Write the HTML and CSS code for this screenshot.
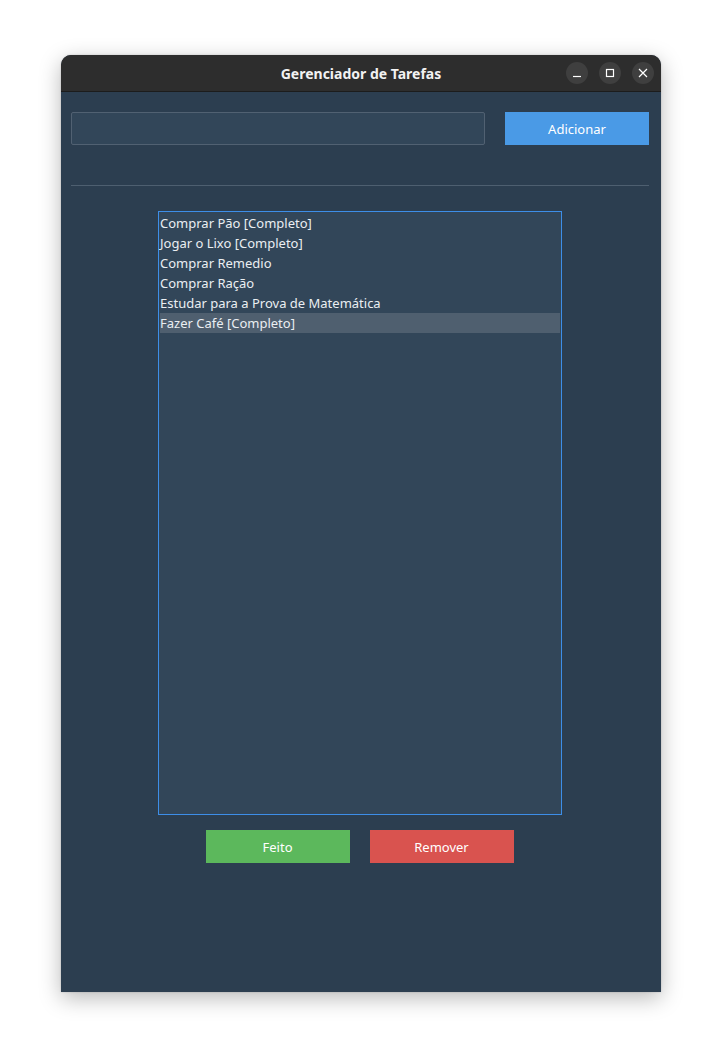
FILE: index.html
```html
<!DOCTYPE html>
<html lang="pt">
<head>
<meta charset="utf-8">
<title>Gerenciador de Tarefas</title>
<link rel="stylesheet" href="styles.css">
</head>
<body>
<div class="window">
  <div class="titlebar">
    <span class="title">Gerenciador de Tarefas</span>
    <div class="controls">
      <span class="ctl"><svg width="10" height="10" viewBox="0 0 10 10"><path d="M1 8.5H9" stroke="#fff" stroke-width="1.2"/></svg></span>
      <span class="ctl"><svg width="10" height="10" viewBox="0 0 10 10"><rect x="1.5" y="1.5" width="7" height="7" fill="none" stroke="#fff" stroke-width="1.2"/></svg></span>
      <span class="ctl"><svg width="10" height="10" viewBox="0 0 10 10"><path d="M1 1L9 9M9 1L1 9" stroke="#fff" stroke-width="1.2"/></svg></span>
    </div>
  </div>
  <div class="content">
    <div class="entry-row">
      <input class="entry" type="text">
      <button class="btn btn-add">Adicionar</button>
    </div>
    <div class="sep"></div>
    <ul class="list">
      <li>Comprar Pão [Completo]</li>
      <li>Jogar o Lixo [Completo]</li>
      <li>Comprar Remedio</li>
      <li>Comprar Ração</li>
      <li>Estudar para a Prova de Matemática</li>
      <li class="selected">Fazer Café [Completo]</li>
    </ul>
    <div class="actions">
      <button class="btn btn-done">Feito</button>
      <button class="btn btn-remove">Remover</button>
    </div>
  </div>
</div>
</body>
</html>
```

FILE: styles.css
```css
* { box-sizing: border-box; }
html, body { margin: 0; padding: 0; background: #ffffff; }
body {
  width: 722px;
  height: 1059px;
  font-family: "Noto Sans", "Open Sans", sans-serif;
  padding: 55px 0 0 61px;
}
.window {
  width: 600px;
  height: 937px;
  background: #2c3e50;
  border-radius: 10px 10px 0 0;
  box-shadow: 0 6px 22px rgba(0,0,0,0.28), 0 0 2px rgba(0,0,0,0.2);
  display: flex;
  flex-direction: column;
}
.titlebar {
  height: 37px;
  background: #2d2d2d;
  border-radius: 10px 10px 0 0;
  border-bottom: 1px solid #1c1c1c;
  display: flex;
  align-items: center;
  justify-content: center;
  position: relative;
}
.title {
  color: #f2f2f2;
  font-family: "Noto Sans", sans-serif;
  font-weight: 700;
  font-size: 14px;
  letter-spacing: 0;
}
.controls {
  position: absolute;
  right: 7px;
  top: 7px;
  display: flex;
  gap: 11px;
}
.ctl {
  width: 22px;
  height: 22px;
  border-radius: 50%;
  background: #3f3f3f;
  display: flex;
  align-items: center;
  justify-content: center;
}
.content {
  flex: 1;
  padding: 20px 12px 0 10px;
  display: flex;
  flex-direction: column;
}
.entry-row {
  display: flex;
  gap: 20px;
  align-items: flex-start;
}
.entry {
  width: 414px;
  height: 33px;
  background: #324659;
  border: 1px solid #516172;
  border-radius: 2px;
  outline: none;
  margin: 0;
}
.btn {
  width: 144px;
  height: 33px;
  border: none;
  border-radius: 0;
  color: #ffffff;
  font-family: "Noto Sans", sans-serif;
  font-size: 13px;
  padding: 0;
  margin: 0;
}
.btn-add { background: #4a9ae6; }
.btn-done { background: #5cb85c; }
.btn-remove { background: #d9534f; }
.sep {
  height: 1px;
  background: #4e5f70;
  margin-top: 40px;
}
.list {
  list-style: none;
  margin: 25px 0 0 87px;
  padding: 1px 1px;
  width: 404px;
  height: 604px;
  background: #324659;
  border: 1px solid #3d8ee8;
  font-size: 13px;
  color: #eaeef2;
}
.list li {
  height: 20px;
  line-height: 20px;
  padding-left: 0;
  white-space: nowrap;
}
.list li.selected { background: #4f5f6f; }
.actions {
  display: flex;
  justify-content: center;
  gap: 20px;
  margin-top: 15px;
  padding-right: 0;
  margin-left: -1px;
}
```
